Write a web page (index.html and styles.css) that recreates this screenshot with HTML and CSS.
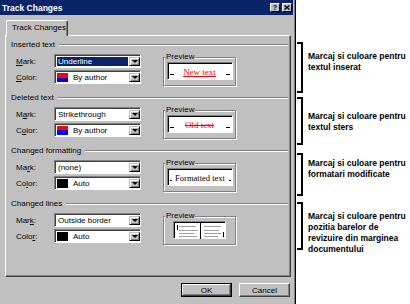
FILE: index.html
```html
<!DOCTYPE html>
<html lang="en">
<head>
    <meta charset="UTF-8">
    <title>Track Changes</title>
    <link rel="stylesheet" href="styles.css">
</head>
<body>

<div class="screen">
    <div class="dialog">
        <div class="titlebar">
            <span class="title">Track Changes</span>
            <div class="caption-btns">
                <span class="cbtn">?</span>
                <span class="cbtn">
                    <svg width="6" height="5" viewBox="0 0 6 5"><path d="M0.5 0.5 L5.5 4.5 M5.5 0.5 L0.5 4.5" stroke="#000" stroke-width="1.3"/></svg>
                </span>
            </div>
        </div>

        <div class="body">
            <div class="tabs">
                <div class="tab">Track Changes</div>
            </div>

            <div class="panel">
                <!-- inserted -->
                <div class="group">
                    <div class="group-head">Inserted text</div>
                    <div class="group-body">
                        <div class="fields">
                            <div class="row">
                                <label><u>M</u>ark:</label>
                                <div class="select">
                                    <span class="value selected">Underline</span>
                                    <span class="arrow"></span>
                                </div>
                            </div>
                            <div class="row">
                                <label><u>C</u>olor:</label>
                                <div class="select">
                                    <span class="swatch by-author"></span>
                                    <span class="value">By author</span>
                                    <span class="arrow"></span>
                                </div>
                            </div>
                        </div>
                        <div class="preview">
                            <div class="legend"><span>Preview</span></div>
                            <div class="preview-frame">
                                <div class="preview-box sample">
                                    <span class="tick"></span>
                                    <span class="sample-text inserted">New text</span>
                                    <span class="tick"></span>
                                </div>
                            </div>
                        </div>
                    </div>
                </div>

                <!-- deleted -->
                <div class="group">
                    <div class="group-head">Deleted text</div>
                    <div class="group-body">
                        <div class="fields">
                            <div class="row">
                                <label>M<u>a</u>rk:</label>
                                <div class="select">
                                    <span class="value">Strikethrough</span>
                                    <span class="arrow"></span>
                                </div>
                            </div>
                            <div class="row">
                                <label>C<u>o</u>lor:</label>
                                <div class="select">
                                    <span class="swatch by-author"></span>
                                    <span class="value">By author</span>
                                    <span class="arrow"></span>
                                </div>
                            </div>
                        </div>
                        <div class="preview">
                            <div class="legend"><span>Preview</span></div>
                            <div class="preview-frame">
                                <div class="preview-box sample">
                                    <span class="tick"></span>
                                    <span class="sample-text deleted">Old text</span>
                                    <span class="tick"></span>
                                </div>
                            </div>
                        </div>
                    </div>
                </div>

                <!-- formatting -->
                <div class="group">
                    <div class="group-head">Changed formatting</div>
                    <div class="group-body">
                        <div class="fields">
                            <div class="row">
                                <label>Ma<u>r</u>k:</label>
                                <div class="select">
                                    <span class="value">(none)</span>
                                    <span class="arrow"></span>
                                </div>
                            </div>
                            <div class="row">
                                <label>Co<u>l</u>or:</label>
                                <div class="select">
                                    <span class="swatch auto"></span>
                                    <span class="value">Auto</span>
                                    <span class="arrow"></span>
                                </div>
                            </div>
                        </div>
                        <div class="preview">
                            <div class="legend"><span>Preview</span></div>
                            <div class="preview-frame">
                                <div class="preview-box sample tight">
                                    <span class="tick"></span>
                                    <span class="sample-text">Formatted text</span>
                                    <span class="tick"></span>
                                </div>
                            </div>
                        </div>
                    </div>
                </div>

                <!-- lines -->
                <div class="group">
                    <div class="group-head">Changed lines</div>
                    <div class="group-body">
                        <div class="fields">
                            <div class="row">
                                <label>Mar<u>k</u>:</label>
                                <div class="select">
                                    <span class="value">Outside border</span>
                                    <span class="arrow"></span>
                                </div>
                            </div>
                            <div class="row">
                                <label>Colo<u>r</u>:</label>
                                <div class="select">
                                    <span class="swatch auto"></span>
                                    <span class="value">Auto</span>
                                    <span class="arrow"></span>
                                </div>
                            </div>
                        </div>
                        <div class="preview">
                            <div class="legend"><span>Preview</span></div>
                            <div class="preview-frame">
                                <div class="preview-box pages">
                                    <svg width="51" height="16" viewBox="0 0 51 16">
                                        <g stroke="#a0a0a0" stroke-width="1">
                                            <path d="M4 3.5 H21 M4 7.5 H23 M4 10.5 H19 M4 13.5 H22"/>
                                            <path d="M29 3.5 H46 M29 7.5 H44 M29 10.5 H46 M29 13.5 H43"/>
                                        </g>
                                        <path d="M25.5 0 V16" stroke="#000" stroke-width="1"/>
                                        <path d="M2.5 2 V7" stroke="#000" stroke-width="1"/>
                                        <path d="M48.5 9 V14" stroke="#000" stroke-width="1"/>
                                    </svg>
                                </div>
                            </div>
                        </div>
                    </div>
                </div>
            </div>

            <div class="buttons">
                <button class="btn default">OK</button>
                <button class="btn">Cancel</button>
            </div>
        </div>
    </div>

    <div class="notes">
        <div class="note note-1">
            <div class="bracket"></div>
            <div class="note-text">Marcaj si culoare pentru<br>textul inserat</div>
        </div>
        <div class="note note-2">
            <div class="bracket"></div>
            <div class="note-text">Marcaj si culoare pentru<br>textul sters</div>
        </div>
        <div class="note note-3">
            <div class="bracket"></div>
            <div class="note-text">Marcaj si culoare pentru<br>formatari modificate</div>
        </div>
        <div class="note note-4">
            <div class="bracket"></div>
            <div class="note-text">Marcaj si culoare pentru<br>pozitia barelor de<br>revizuire din marginea<br>documentului</div>
        </div>
    </div>
</div>

</body>
</html>
```

FILE: styles.css
```css
body {
    margin: 0;
    background-color: #fff;
    font-family: "Liberation Sans", Arial, sans-serif;
    font-size: 8px;
    color: #000;
}
.screen {
    display: flex;
    align-items: flex-start;
}

/* dialog window */
.dialog {
    width: 295px;
    height: 304px;
    background-color: #c0c0c0;
    border-right: 1px solid #000;
    box-shadow: inset -1px 0 0 #808080;
}
.titlebar {
    height: 15px;
    margin-right: 2px;
    padding: 0 1px 0 2px;
    background-color: #0a246a;
    display: flex;
    align-items: center;
    justify-content: space-between;
}
.title {
    color: #fff;
    font-weight: bold;
    font-size: 8.5px;
}
.caption-btns {
    display: flex;
    gap: 2px;
}
.cbtn {
    width: 10px;
    height: 9px;
    box-sizing: border-box;
    background-color: #c0c0c0;
    border: 1px solid;
    border-color: #fff #000 #000 #fff;
    display: flex;
    align-items: center;
    justify-content: center;
    font-weight: bold;
    font-size: 7px;
    line-height: 7px;
}
.body {
    padding: 5px 4px 0 5px;
}

/* tab */
.tabs {
    display: flex;
    padding-left: 1px;
}
.tab {
    width: 62px;
    height: 16px;
    box-sizing: border-box;
    margin-bottom: -1px;
    padding-left: 5px;
    line-height: 14px;
    background-color: #c0c0c0;
    border: 1px solid;
    border-color: #fff #404040 transparent #fff;
    border-bottom: none;
    border-radius: 2px 2px 0 0;
    box-shadow: inset -1px 0 0 #808080;
    position: relative;
    z-index: 1;
}
.panel {
    height: 242px;
    box-sizing: border-box;
    padding: 4px 2px 0 5px;
    border: 1px solid;
    border-color: #fff #404040 #404040 #fff;
    box-shadow: inset -1px -1px 0 #808080;
}

/* groups */
.group {
    margin-bottom: 7px;
}
.group-head {
    display: flex;
    align-items: center;
    height: 10px;
    line-height: 10px;
}
.group-head::after {
    content: "";
    flex: 1;
    margin-left: 4px;
    border-top: 1px solid #808080;
    border-bottom: 1px solid #fff;
}
.group-body {
    display: flex;
    padding-top: 4px;
}
.fields {
    display: flex;
    flex-direction: column;
    gap: 2px;
    padding-left: 5px;
}
.row {
    display: flex;
    align-items: center;
    height: 14px;
}
.row label {
    width: 38px;
}

/* combo boxes */
.select {
    width: 87px;
    height: 14px;
    box-sizing: border-box;
    padding: 2px 0 1px 2px;
    background-color: #fff;
    border: 1px solid;
    border-color: #808080 #fff #fff #808080;
    box-shadow: inset 1px 1px 0 #404040;
    display: flex;
    align-items: stretch;
}
.value {
    flex: 1;
    padding-left: 1px;
    line-height: 10px;
    white-space: nowrap;
}
.value.selected {
    background-color: #0a246a;
    color: #fff;
    margin-right: 1px;
}
.swatch {
    width: 11px;
    margin-right: 4px;
}
.swatch.by-author {
    background: linear-gradient(#f00 50%, #00f 50%);
}
.swatch.auto {
    background-color: #000;
}
.arrow {
    width: 11px;
    box-sizing: border-box;
    background-color: #c0c0c0;
    border: 1px solid;
    border-color: #c0c0c0 #000 #000 #c0c0c0;
    box-shadow: inset 1px 1px 0 #fff, inset -1px -1px 0 #808080;
    display: flex;
    align-items: center;
    justify-content: center;
}
.arrow::after {
    content: "";
    border-left: 3px solid transparent;
    border-right: 3px solid transparent;
    border-top: 3px solid #000;
}

/* preview */
.preview {
    width: 73px;
    margin-left: 22px;
    margin-top: -1px;
}
.legend {
    height: 8px;
    line-height: 8px;
    padding-left: 2px;
    position: relative;
    z-index: 1;
}
.legend span {
    background-color: #c0c0c0;
    padding: 0 1px;
}
.preview-frame {
    height: 29px;
    box-sizing: border-box;
    margin-top: -4px;
    padding-top: 4px;
    border: 1px solid #808080;
    box-shadow: inset 1px 1px 0 #fff, 1px 1px 0 #fff;
}
.preview-box {
    width: 66px;
    height: 18px;
    box-sizing: border-box;
    margin: 0 auto;
    background-color: #fff;
    border: 1px solid;
    border-color: #808080 #fff #fff #808080;
    box-shadow: inset 1px 1px 0 #000;
}
.sample {
    display: flex;
    align-items: center;
    justify-content: space-between;
    padding: 1px 2px 0 2px;
}
.tick {
    width: 4px;
    height: 1px;
    background-color: #000;
    align-self: flex-end;
    margin-bottom: 4px;
}
.sample.tight {
    padding: 1px 1px 0 2px;
}
.sample.tight .tick {
    width: 2px;
}
.sample.tight .sample-text {
    font-size: 8.5px;
}
.sample-text {
    font-family: "Liberation Serif", "Times New Roman", serif;
    font-size: 9px;
    white-space: nowrap;
}
.sample-text.inserted {
    color: #f00;
    text-decoration: underline;
}
.sample-text.deleted {
    color: #f00;
    text-decoration: line-through;
}
.preview-box.pages {
    width: 53px;
    padding: 1px 0 0 1px;
}
.preview-box.pages svg {
    display: block;
}

/* dialog buttons */
.buttons {
    display: flex;
    justify-content: flex-end;
    gap: 7px;
    padding: 6px 1px 0 0;
}
.btn {
    width: 51px;
    height: 14px;
    box-sizing: border-box;
    padding: 0;
    font-family: "Liberation Sans", Arial, sans-serif;
    font-size: 8px;
    color: #000;
    background-color: #c0c0c0;
    border: 1px solid;
    border-color: #fff #404040 #404040 #fff;
    box-shadow: inset -1px -1px 0 #808080;
}
.btn.default {
    border-color: #000;
    box-shadow: inset -1px -1px 0 #404040, inset 1px 1px 0 #fff, inset -2px -2px 0 #808080;
}

/* annotations */
.notes {
    display: flex;
    flex-direction: column;
    margin-left: 1px;
    padding-top: 42px;
}
.note {
    display: flex;
    align-items: flex-start;
}
.bracket {
    width: 6px;
    box-sizing: border-box;
    border: 2px solid #000;
    border-left: none;
}
.note-text {
    margin-left: 5px;
    font-weight: bold;
    font-size: 8.5px;
    line-height: 11px;
    white-space: nowrap;
}
.note-1 .bracket { height: 51px; }
.note-1 .note-text { padding-top: 9px; }
.note-2 { margin-top: 4px; }
.note-2 .bracket { height: 48px; }
.note-2 .note-text { padding-top: 14px; }
.note-3 { margin-top: 8px; }
.note-3 .bracket { height: 43px; }
.note-3 .note-text { padding-top: 5px; }
.note-4 { margin-top: 6px; }
.note-4 .bracket { height: 48px; }
.note-4 .note-text { padding-top: 9px; }
```
